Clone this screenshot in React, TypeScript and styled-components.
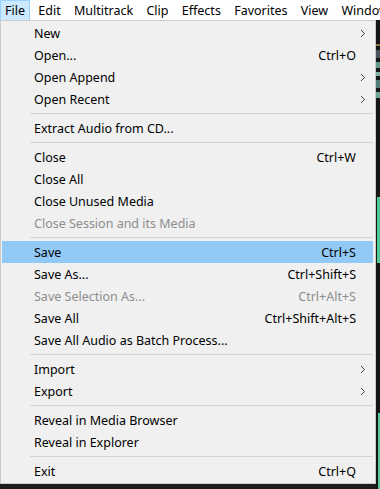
import React from "react";
import styled, { createGlobalStyle } from "styled-components";

const Global = createGlobalStyle`
  html, body { margin: 0; padding: 0; }
  body {
    width: 380px;
    height: 489px;
    overflow: hidden;
    background: #1b1b1b;
    font-family: "Noto Sans", "Open Sans", sans-serif;
    -webkit-font-smoothing: antialiased;
  }
`;

const Page = styled.div`
  width: 380px;
  height: 489px;
  display: flex;
  flex-direction: column;
  background: #1b1b1b;
`;

const MenuBar = styled.div`
  height: 20px;
  background: #ffffff;
  display: flex;
  align-items: stretch;
  flex-shrink: 0;
  overflow: hidden;
`;

const BarItem = styled.div<{ $active?: boolean }>`
  box-sizing: border-box;
  height: 20px;
  padding: 0 4px;
  margin-right: 3.3px;
  display: flex;
  align-items: center;
  font-size: 12.5px;
  color: #000;
  white-space: nowrap;
  background: ${(p) => (p.$active ? "#cce8ff" : "transparent")};
  border: 1px solid ${(p) => (p.$active ? "#99d1ff" : "transparent")};
  border-bottom: none;
  flex-shrink: 0;
`;

const Body = styled.div`
  flex: 1;
  display: flex;
  align-items: flex-start;
`;

const Panel = styled.div`
  box-sizing: border-box;
  width: 376px;
  background: #f0f0f0;
  border: 1px solid #cccccc;
  padding: 1px 2px 1px 1px;
  display: flex;
  flex-direction: column;
`;

const Item = styled.div<{ $highlight?: boolean; $disabled?: boolean }>`
  height: 22px;
  display: grid;
  grid-template-columns: 1fr auto 17px;
  align-items: center;
  padding-left: 32px;
  font-size: 12.5px;
  color: ${(p) => (p.$disabled ? "#8d8d8d" : "#000000")};
  background: ${(p) => (p.$highlight ? "#91c9f7" : "transparent")};
  white-space: nowrap;
`;

const Label = styled.span``;

const Shortcut = styled.span`
  text-align: right;
`;

const ArrowCell = styled.span`
  display: flex;
  align-items: center;
  padding-left: 4px;
`;

const Separator = styled.div`
  height: 7px;
  display: flex;
  align-items: flex-start;
  padding-top: 3px;
  box-sizing: border-box;
  padding-left: 28px;
  &::after {
    content: "";
    display: block;
    width: 100%;
    height: 1px;
    background: #d4d4d4;
  }
`;

const Strip = styled.svg`
  display: block;
  flex-shrink: 0;
`;

const Chevron = () => (
  <svg width="6" height="9" viewBox="0 0 6 9">
    <polyline points="1,1 4.5,4.5 1,8" fill="none" stroke="#444" strokeWidth="1" />
  </svg>
);

type Entry =
  | { sep: true }
  | { label: string; shortcut?: string; sub?: boolean; disabled?: boolean; hl?: boolean };

const entries: Entry[] = [
  { label: "New", sub: true },
  { label: "Open...", shortcut: "Ctrl+O" },
  { label: "Open Append", sub: true },
  { label: "Open Recent", sub: true },
  { sep: true },
  { label: "Extract Audio from CD..." },
  { sep: true },
  { label: "Close", shortcut: "Ctrl+W" },
  { label: "Close All" },
  { label: "Close Unused Media" },
  { label: "Close Session and its Media", disabled: true },
  { sep: true },
  { label: "Save", shortcut: "Ctrl+S", hl: true },
  { label: "Save As...", shortcut: "Ctrl+Shift+S" },
  { label: "Save Selection As...", shortcut: "Ctrl+Alt+S", disabled: true },
  { label: "Save All", shortcut: "Ctrl+Shift+Alt+S" },
  { label: "Save All Audio as Batch Process..." },
  { sep: true },
  { label: "Import", sub: true },
  { label: "Export", sub: true },
  { sep: true },
  { label: "Reveal in Media Browser" },
  { label: "Reveal in Explorer" },
  { sep: true },
  { label: "Exit", shortcut: "Ctrl+Q" },
];

const barItems = ["File", "Edit", "Multitrack", "Clip", "Effects", "Favorites", "View", "Window"];

export default function App() {
  return (
    <>
      <Global />
      <Page>
        <MenuBar>
          {barItems.map((b, i) => (
            <BarItem key={b} $active={i === 0}>
              {b}
            </BarItem>
          ))}
        </MenuBar>
        <Body>
          <Panel>
            {entries.map((e, i) =>
              "sep" in e ? (
                <Separator key={i} />
              ) : (
                <Item key={i} $highlight={e.hl} $disabled={e.disabled}>
                  <Label>{e.label}</Label>
                  <Shortcut>{e.shortcut ?? ""}</Shortcut>
                  <ArrowCell>{e.sub ? <Chevron /> : null}</ArrowCell>
                </Item>
              )
            )}
          </Panel>
          <Strip width="4" height="469" viewBox="0 0 4 469">
            <rect x="0" y="0" width="4" height="469" fill="#151515" />
            <rect x="0" y="24" width="4" height="2" fill="#8a7448" />
            <rect x="0" y="30" width="4" height="8" fill="#4a5560" />
            <rect x="0" y="42" width="4" height="6" fill="#5f9c8e" />
            <rect x="0" y="52" width="4" height="4" fill="#7fb0a4" />
            <rect x="0" y="60" width="4" height="8" fill="#4d7f76" />
            <rect x="0" y="72" width="4" height="6" fill="#6aa597" />
            <rect x="1" y="177" width="3" height="66" fill="#4fc995" />
            <rect x="2" y="393" width="2" height="76" fill="#4fc995" />
          </Strip>
        </Body>
      </Page>
    </>
  );
}
